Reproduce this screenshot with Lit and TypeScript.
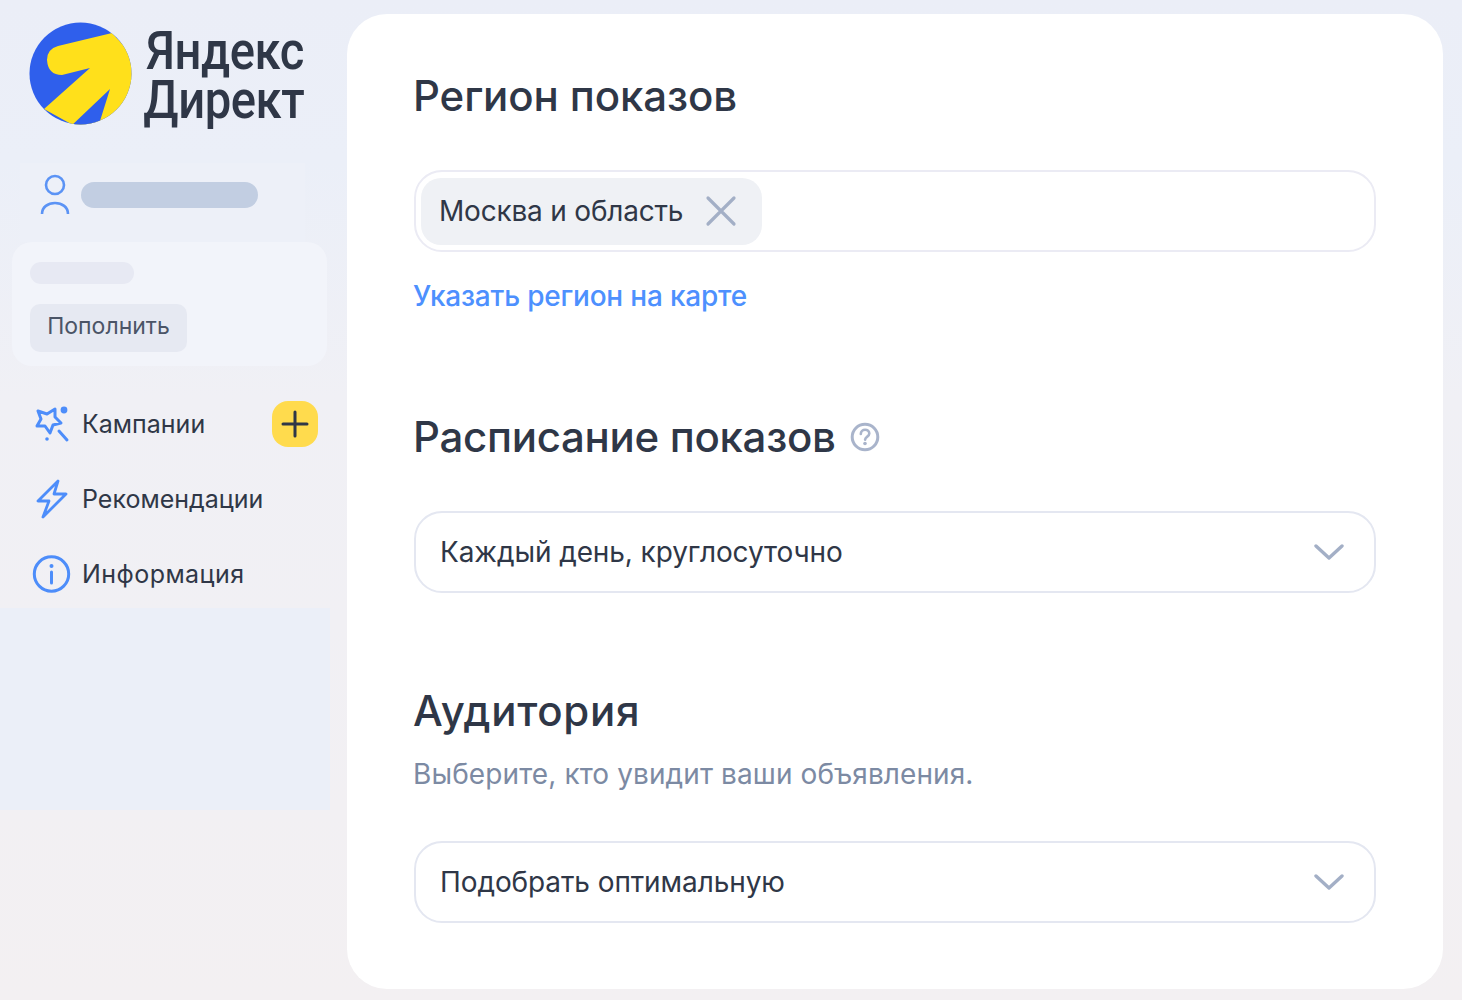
import { LitElement, html, css } from "lit";
import { customElement } from "lit/decorators.js";

const chevron = html`<svg class="chev" viewBox="0 0 30 18" fill="none"><path d="M2 3l13 12L28 3" stroke="#A3AFC6" stroke-width="3.4" stroke-linecap="round" stroke-linejoin="round"/></svg>`;

@customElement("app-root")
export class AppRoot extends LitElement {
  static styles = css`
    :host { display: block; width: 1462px; height: 1000px; overflow: hidden; font-family: Inter, "Noto Sans", sans-serif; color: #2f3747; }
    * { box-sizing: border-box; }
    .page { display: flex; height: 1000px; background: linear-gradient(180deg, #ebeef7 0px, #ebeff8 160px, #f0f0f5 400px, #f1f0f4 620px, #f3f0f2 1000px); }
    .side { width: 347px; flex: none; display: flex; flex-direction: column; }
    .logo { display: flex; height: 163px; padding: 22px 0 0 29px; }
    .logo svg { width: 103px; height: 103px; flex: none; }
    .wordmark { margin: 5px 0 0 14px; font-family: Roboto, sans-serif; font-weight: 500; font-size: 53px; line-height: 49px; color: #2f3747; transform: scaleX(.89); transform-origin: 0 0; letter-spacing: -.5px; white-space: nowrap; }
    .wordmark div + div { margin-left: -3px; }
    .user { margin-left: 20px; width: 285px; height: 79px; display: flex; align-items: center; padding: 0 0 16px 20px; background: #edf0f8; }
    .user svg { width: 30px; height: 42px; flex: none; }
    .user i { display: block; width: 177px; height: 26px; margin-left: 11px; border-radius: 13px; background: #c2cee2; }
    .balance { margin: 0 20px 0 12px; height: 124px; padding: 20px 18px; border-radius: 20px; background: #f2f4fa; }
    .balance i { display: block; width: 104px; height: 22px; border-radius: 11px; background: #e7e9f3; }
    .topup { margin-top: 20px; width: 157px; height: 48px; border-radius: 10px; background: #e6e9f2; font-size: 23px; line-height: 45px; text-align: center; color: #4b5567; }
    .nav { margin: 20px 0 -3px; display: flex; flex-direction: column; }
    .item { height: 75px; flex: none; display: flex; align-items: center; padding: 0 29px 0 32px; font-size: 25px; color: #2f3747; }
    .item svg.ic { width: 40px; height: 40px; flex: none; margin-right: 10px; }
    .wide { letter-spacing: .45px; }
    .plus { margin-left: auto; width: 46px; height: 46px; border-radius: 16px; background: #ffdb4d; display: flex; align-items: center; justify-content: center; }
    .plus svg { width: 28px; height: 28px; }
    .patch { width: 330px; height: 202px; background: #ebeff8; }
    .card { margin-top: 14px; width: 1096px; height: 975px; flex: none; background: #fff; border-radius: 40px; padding: 0 67px; }
    h2 { margin: 0 0 0 -1px; font-weight: 500; font-size: 42px; line-height: 56px; color: #2f3747; display: flex; align-items: center; letter-spacing: -.3px; }
    h2 svg { width: 30px; height: 30px; margin-left: 14px; }
    .t1 { margin-top: 54px; letter-spacing: -.1px; }
    .t2 { margin-top: 93px; }
    .t3 { margin-top: 90px; letter-spacing: .7px; }
    .field { height: 82px; border: 2px solid #ebebf4; border-radius: 28px; display: flex; align-items: center; }
    .region { margin-top: 46px; padding-left: 5px; }
    .chip { height: 67px; width: 341px; border-radius: 20px; background: #eff1f5; display: flex; align-items: center; padding-left: 18px; font-size: 28px; letter-spacing: -.2px; white-space: nowrap; }
    .chip svg { width: 32px; height: 32px; margin-left: auto; margin-right: 25px; flex: none; }
    .link { margin: 24px 0 0 -1px; font-size: 28px; line-height: 40px; color: #4d90fe; font-weight: 500; letter-spacing: -.2px; }
    .select { padding: 0 30px 0 24px; font-size: 28px; letter-spacing: -.1px; justify-content: space-between; border-color: #e4e7f1; }
    .chev { width: 30px; height: 18px; flex: none; }
    .s2 { margin-top: 46px; }
    .sub { margin: 15px 0 0 -1px; font-size: 28px; line-height: 40px; color: #7c8aa3; letter-spacing: .1px; }
    .s3 { margin-top: 47px; }
  `;

  render() {
    return html`
      <div class="page">
        <aside class="side">
          <div class="logo">
            <svg viewBox="0 0 103 103">
              <defs><clipPath id="c"><circle cx="51.5" cy="51.5" r="51"/></clipPath></defs>
              <g clip-path="url(#c)">
                <rect width="103" height="103" fill="#2f5fec"/>
                <path d="M83 11L29 24Q18 27 18 38Q19 53 33 53L61 46L15 87L60 112L92 112L110 40Z" fill="#ffe01b"/>
                <path d="M81 67L40 106L68 112L71 99Z" fill="#2f5fec"/>
              </g>
            </svg>
            <div class="wordmark"><div>Яндекс</div><div>Директ</div></div>
          </div>
          <div class="user">
            <svg viewBox="0 0 30 42" fill="none" stroke="#5b93f5" stroke-width="2.6"><circle cx="15" cy="11" r="9"/><path d="M2 40c0-7 6-11 13-11s13 4 13 11"/></svg>
            <i></i>
          </div>
          <div class="balance"><i></i><div class="topup">Пополнить</div></div>
          <nav class="nav">
            <div class="item">
              <svg class="ic" viewBox="0 0 40 40" fill="none" stroke="#4d8dfa" stroke-width="3" stroke-linecap="round" stroke-linejoin="round">
                <path d="M6 7l9 3 8-5 0 8 6 6-8 2-3 8-5-7-8 0 4-7z"/>
                <path d="M27 27l8 9"/>
                <circle cx="32" cy="6" r="3.4" fill="#4d8dfa" stroke="none"/>
                <circle cx="15" cy="35" r="1.8" fill="#4d8dfa" stroke="none"/>
              </svg>
              Кампании
              <div class="plus"><svg viewBox="0 0 28 28" fill="none" stroke="#2f3747" stroke-width="3" stroke-linecap="round"><path d="M14 2v24M2 14h24"/></svg></div>
            </div>
            <div class="item">
              <svg class="ic" viewBox="0 0 40 40" fill="none" stroke="#4d8dfa" stroke-width="2.8" stroke-linejoin="round" stroke-linecap="round"><path d="M26 2L6 22h11l-6 16 23-23H22z"/></svg>
              Рекомендации
            </div>
            <div class="item">
              <svg class="ic" viewBox="0 0 40 40" fill="none" stroke="#4d8dfa" stroke-width="3"><circle cx="19.5" cy="20" r="17.2"/><path d="M19.5 18v11" stroke-linecap="round"/><circle cx="19.5" cy="12" r="2" fill="#4d8dfa" stroke="none"/></svg>
              <span class="wide">Информация</span>
            </div>
          </nav>
          <div class="patch"></div>
        </aside>
        <main class="card">
          <h2 class="t1">Регион показов</h2>
          <div class="field region">
            <div class="chip">Москва и область
              <svg viewBox="0 0 32 32" fill="none" stroke="#a3afc6" stroke-width="3.2" stroke-linecap="round"><path d="M3 3l26 26M29 3L3 29"/></svg>
            </div>
          </div>
          <div class="link">Указать регион на карте</div>
          <h2 class="t2">Расписание показов
            <svg viewBox="0 0 30 30" fill="none"><circle cx="15" cy="15" r="12.8" stroke="#a9b4cb" stroke-width="3"/><path d="M10.8 12c0-2.6 2-4.2 4.3-4.2s4.2 1.5 4.2 3.8c0 3-3.9 3-4.2 6" stroke="#a9b4cb" stroke-width="2.6" stroke-linecap="round"/><circle cx="15" cy="21.5" r="1.8" fill="#a9b4cb"/></svg>
          </h2>
          <div class="field select s2"><span>Каждый день, круглосуточно</span>${chevron}</div>
          <h2 class="t3">Аудитория</h2>
          <div class="sub">Выберите, кто увидит ваши объявления.</div>
          <div class="field select s3"><span>Подобрать оптимальную</span>${chevron}</div>
        </main>
      </div>
    `;
  }
}
